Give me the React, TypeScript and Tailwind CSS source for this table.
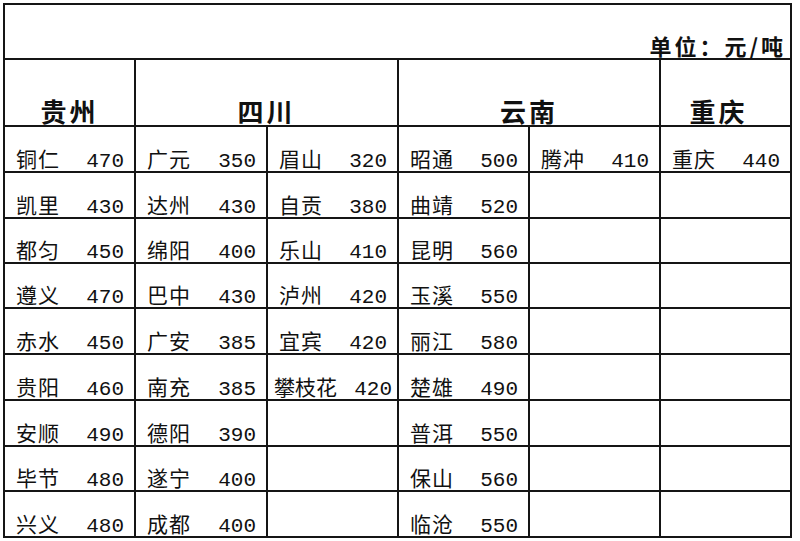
type Cell = { name: string; price: string } | null;

const columns: Cell[][] = [
  [
    { name: '铜仁', price: '470' },
    { name: '凯里', price: '430' },
    { name: '都匀', price: '450' },
    { name: '遵义', price: '470' },
    { name: '赤水', price: '450' },
    { name: '贵阳', price: '460' },
    { name: '安顺', price: '490' },
    { name: '毕节', price: '480' },
    { name: '兴义', price: '480' },
  ],
  [
    { name: '广元', price: '350' },
    { name: '达州', price: '430' },
    { name: '绵阳', price: '400' },
    { name: '巴中', price: '430' },
    { name: '广安', price: '385' },
    { name: '南充', price: '385' },
    { name: '德阳', price: '390' },
    { name: '遂宁', price: '400' },
    { name: '成都', price: '400' },
  ],
  [
    { name: '眉山', price: '320' },
    { name: '自贡', price: '380' },
    { name: '乐山', price: '410' },
    { name: '泸州', price: '420' },
    { name: '宜宾', price: '420' },
    { name: '攀枝花', price: '420' },
    null,
    null,
    null,
  ],
  [
    { name: '昭通', price: '500' },
    { name: '曲靖', price: '520' },
    { name: '昆明', price: '560' },
    { name: '玉溪', price: '550' },
    { name: '丽江', price: '580' },
    { name: '楚雄', price: '490' },
    { name: '普洱', price: '550' },
    { name: '保山', price: '560' },
    { name: '临沧', price: '550' },
  ],
  [{ name: '腾冲', price: '410' }, null, null, null, null, null, null, null, null],
  [{ name: '重庆', price: '440' }, null, null, null, null, null, null, null, null],
];

const cjk = { fontFamily: '"Noto Sans CJK SC", "Noto Sans", sans-serif' };
const mono = { fontFamily: '"Liberation Mono", "DejaVu Sans Mono", monospace' };

function DataCell({ cell }: { cell: Cell }) {
  if (!cell) return <div className="bg-white" />;
  const long = cell.name.length > 2;
  return (
    <div
      className={`flex flex-col justify-end bg-white text-[#111] ${
        long ? 'pl-[6px] pr-[5px]' : 'pl-[11px] pr-[10px]'
      }`}
    >
      <div className="flex translate-y-[1px] items-baseline justify-between">
        <span className={`text-[21px] leading-none ${long ? 'tracking-[0px]' : 'tracking-[1px]'}`} style={cjk}>
          {cell.name}
        </span>
        <span className="text-[21px] leading-none" style={mono}>
          {cell.price}
        </span>
      </div>
    </div>
  );
}

function Header({ label, span, extra = '' }: { label: string; span: string; extra?: string }) {
  return (
    <div className={`flex items-end justify-center bg-white pb-[1px] ${span} ${extra}`}>
      <span className="text-[26px] font-bold leading-none tracking-[3px] text-[#111]" style={cjk}>
        {label}
      </span>
    </div>
  );
}

export default function App() {
  const rows = Array.from({ length: 9 }, (_, r) => columns.map((col) => col[r]));
  return (
    <div className="h-[541px] w-[800px] bg-white pl-[3px] pt-[3px]">
      <div className="grid w-[789px] grid-cols-[129px_130px_129px_129px_129px_129px] grid-rows-[53px_65px_44px_44px_43px_43px_44px_44px_44px_43px_44px] gap-[2px] bg-[#151515] p-[2px]">
        <div className="col-span-6 flex items-end justify-end bg-white pb-[2px] pr-[4px]">
          <span className="text-[22px] font-bold leading-none tracking-[3px] text-[#111]" style={cjk}>
            单位：元/吨
          </span>
        </div>
        <Header label="贵州" span="col-span-1" />
        <Header label="四川" span="col-span-2" />
        <Header label="云南" span="col-span-2" />
        <Header label="重庆" span="col-span-1" extra="pr-[14px]" />
        {rows.map((row, r) =>
          row.map((cell, c) => <DataCell key={`${r}-${c}`} cell={cell} />),
        )}
      </div>
    </div>
  );
}
